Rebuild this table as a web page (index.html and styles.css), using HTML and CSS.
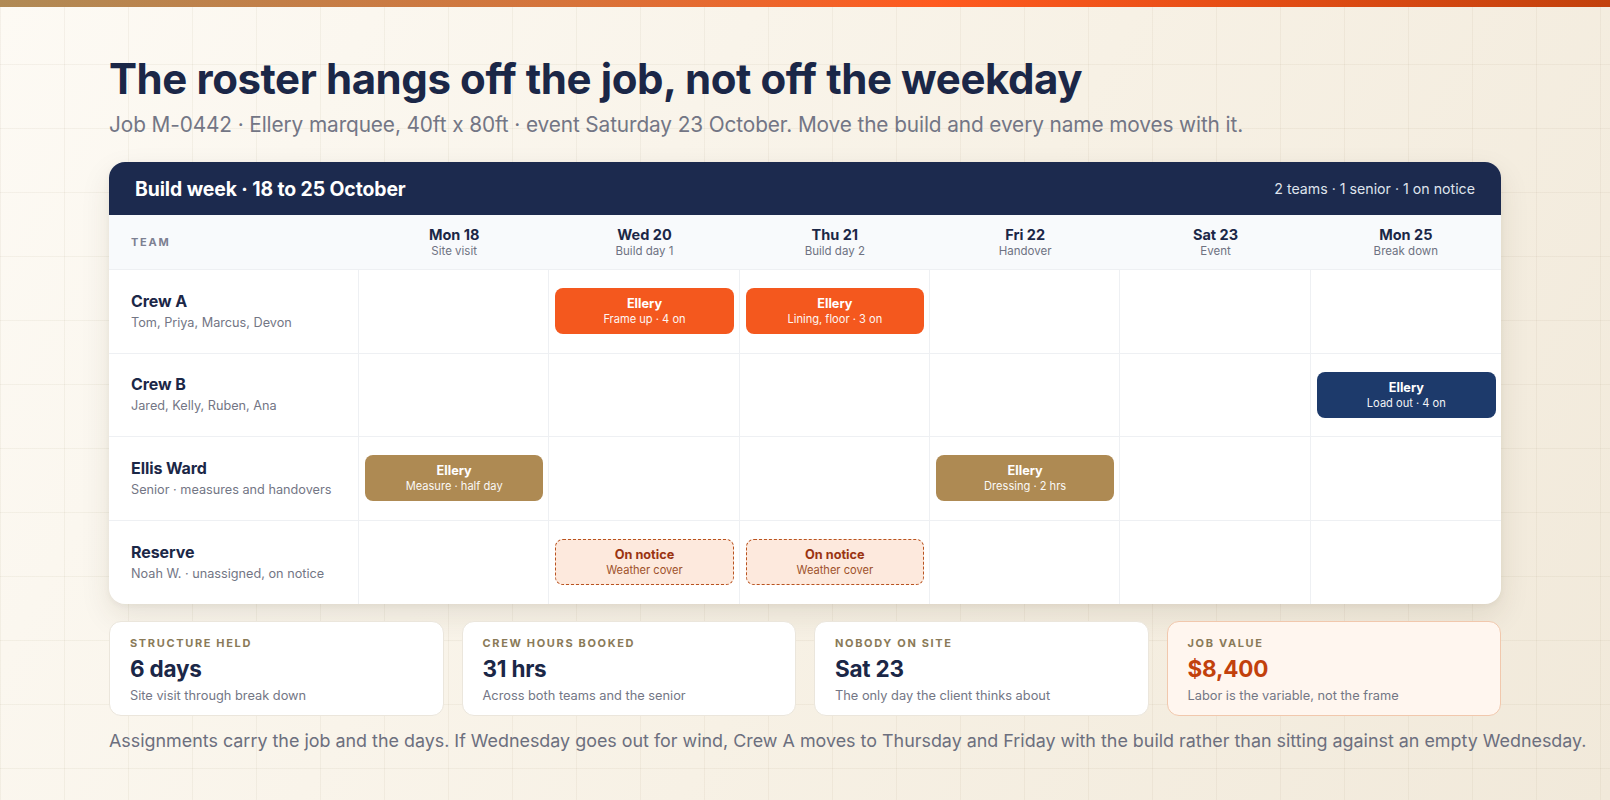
FILE: index.html
```html
<!DOCTYPE html>
<html lang="en">
<head>
<meta charset="utf-8">
<title>Build week roster</title>
<link rel="stylesheet" href="styles.css">
</head>
<body>
<div class="topbar"></div>
<main class="page">
  <h1 class="title">The roster hangs off the job, not off the weekday</h1>
  <p class="lede">Job M-0442 · Ellery marquee, 40ft x 80ft · event Saturday 23 October. Move the build and every name moves with it.</p>

  <section class="board">
    <header class="board-head">
      <h2 class="board-title">Build week · 18 to 25 October</h2>
      <span class="board-meta">2 teams · 1 senior · 1 on notice</span>
    </header>
    <div class="grid">
      <div class="cell colhead team-label">TEAM</div>
      <div class="cell colhead day"><span class="day-name">Mon 18</span><span class="day-sub">Site visit</span></div>
      <div class="cell colhead day"><span class="day-name">Wed 20</span><span class="day-sub">Build day 1</span></div>
      <div class="cell colhead day"><span class="day-name">Thu 21</span><span class="day-sub">Build day 2</span></div>
      <div class="cell colhead day"><span class="day-name">Fri 22</span><span class="day-sub">Handover</span></div>
      <div class="cell colhead day"><span class="day-name">Sat 23</span><span class="day-sub">Event</span></div>
      <div class="cell colhead day last"><span class="day-name">Mon 25</span><span class="day-sub">Break down</span></div>

      <div class="cell team"><span class="team-name">Crew A</span><span class="team-sub">Tom, Priya, Marcus, Devon</span></div>
      <div class="cell slot"></div>
      <div class="cell slot"><div class="chip orange"><span class="chip-t">Ellery</span><span class="chip-s">Frame up · 4 on</span></div></div>
      <div class="cell slot"><div class="chip orange"><span class="chip-t">Ellery</span><span class="chip-s">Lining, floor · 3 on</span></div></div>
      <div class="cell slot"></div>
      <div class="cell slot"></div>
      <div class="cell slot last"></div>

      <div class="cell team"><span class="team-name">Crew B</span><span class="team-sub">Jared, Kelly, Ruben, Ana</span></div>
      <div class="cell slot"></div>
      <div class="cell slot"></div>
      <div class="cell slot"></div>
      <div class="cell slot"></div>
      <div class="cell slot"></div>
      <div class="cell slot last"><div class="chip navy"><span class="chip-t">Ellery</span><span class="chip-s">Load out · 4 on</span></div></div>

      <div class="cell team"><span class="team-name">Ellis Ward</span><span class="team-sub">Senior · measures and handovers</span></div>
      <div class="cell slot"><div class="chip tan"><span class="chip-t">Ellery</span><span class="chip-s">Measure · half day</span></div></div>
      <div class="cell slot"></div>
      <div class="cell slot"></div>
      <div class="cell slot"><div class="chip tan"><span class="chip-t">Ellery</span><span class="chip-s">Dressing · 2 hrs</span></div></div>
      <div class="cell slot"></div>
      <div class="cell slot last"></div>

      <div class="cell team bottom"><span class="team-name">Reserve</span><span class="team-sub">Noah W. · unassigned, on notice</span></div>
      <div class="cell slot bottom"></div>
      <div class="cell slot bottom"><div class="chip notice"><span class="chip-t">On notice</span><span class="chip-s">Weather cover</span></div></div>
      <div class="cell slot bottom"><div class="chip notice"><span class="chip-t">On notice</span><span class="chip-s">Weather cover</span></div></div>
      <div class="cell slot bottom"></div>
      <div class="cell slot bottom"></div>
      <div class="cell slot bottom last"></div>
    </div>
  </section>

  <section class="stats">
    <div class="stat">
      <span class="stat-label">STRUCTURE HELD</span>
      <span class="stat-value">6 days</span>
      <span class="stat-sub">Site visit through break down</span>
    </div>
    <div class="stat">
      <span class="stat-label">CREW HOURS BOOKED</span>
      <span class="stat-value">31 hrs</span>
      <span class="stat-sub">Across both teams and the senior</span>
    </div>
    <div class="stat">
      <span class="stat-label">NOBODY ON SITE</span>
      <span class="stat-value">Sat 23</span>
      <span class="stat-sub">The only day the client thinks about</span>
    </div>
    <div class="stat accent">
      <span class="stat-label">JOB VALUE</span>
      <span class="stat-value">$8,400</span>
      <span class="stat-sub">Labor is the variable, not the frame</span>
    </div>
  </section>

  <p class="note">Assignments carry the job and the days. If Wednesday goes out for wind, Crew A moves to Thursday and Friday with the build rather than sitting against an empty Wednesday.</p>
</main>
</body>
</html>
```

FILE: styles.css
```css
* { box-sizing: border-box; }

html, body {
  margin: 0;
  padding: 0;
}

body {
  font-family: Inter, "Noto Sans", sans-serif;
  color: #1b2747;
  min-height: 800px;
  background-color: #f8f3ea;
  background-image:
    linear-gradient(to right, rgba(150, 130, 95, 0.08) 1px, transparent 1px),
    linear-gradient(to bottom, rgba(150, 130, 95, 0.08) 1px, transparent 1px),
    linear-gradient(120deg, #fdfaf4 0%, #f7f1e5 55%, #f1e9da 100%);
  background-size: 64px 64px, 64px 64px, 100% 100%;
  overflow: hidden;
}

.topbar {
  height: 7px;
  background: linear-gradient(90deg, #b08a55 0%, #d6743b 35%, #ff5a1f 58%, #e84f16 75%, #c2410c 100%);
}

.page {
  width: 1392px;
  margin: 0 auto;
  padding-top: 48px;
}

.title {
  margin: 0;
  font-size: 42px;
  line-height: 48px;
  font-weight: 700;
  letter-spacing: -0.01em;
  color: #1b2747;
}

.lede {
  margin: 8px 0 0;
  font-size: 20.8px;
  line-height: 28px;
  color: #737685;
  letter-spacing: -0.005em;
}

.board {
  margin-top: 23px;
  background: #ffffff;
  border-radius: 16px;
  overflow: hidden;
  box-shadow: 0 12px 30px rgba(60, 45, 20, 0.10), 0 2px 6px rgba(60, 45, 20, 0.05);
}

.board-head {
  height: 53px;
  background: #1c2a4e;
  display: flex;
  align-items: center;
  justify-content: space-between;
  padding: 0 26px;
}

.board-title {
  margin: 0;
  font-size: 19.4px;
  font-weight: 700;
  color: #ffffff;
  letter-spacing: -0.005em;
}

.board-meta {
  font-size: 14.2px;
  color: #dfe3ec;
}

.grid {
  display: grid;
  grid-template-columns: 250px repeat(6, 1fr);
  grid-template-rows: 55px repeat(4, 83.5px);
}

.cell {
  border-right: 1px solid #eef0f3;
  border-bottom: 1px solid #eef0f3;
  display: flex;
  flex-direction: column;
  justify-content: center;
}

.cell.last { border-right: none; }
.cell.bottom { border-bottom: none; }

.colhead {
  background: #f8fafc;
  border-right: none;
}

.team-label {
  padding-left: 22px;
  font-size: 11px;
  font-weight: 700;
  letter-spacing: 0.16em;
  color: #7c8092;
}

.day {
  align-items: center;
  gap: 1px;
}

.day-name {
  font-size: 14.5px;
  font-weight: 700;
  color: #1b2747;
  line-height: 17px;
}

.day-sub {
  font-size: 11.5px;
  color: #6e7282;
  line-height: 15px;
}

.team {
  padding-left: 22px;
  gap: 4px;
}

.team-name {
  font-size: 16px;
  font-weight: 700;
  color: #1b2747;
  line-height: 19px;
  letter-spacing: -0.005em;
}

.team-sub {
  font-size: 12.7px;
  color: #737685;
  line-height: 16px;
}

.slot {
  padding: 0 5px 0 6px;
}

.chip {
  height: 46px;
  border-radius: 8px;
  display: flex;
  flex-direction: column;
  align-items: center;
  justify-content: center;
  gap: 1px;
  color: #ffffff;
}

.chip-t {
  font-size: 12.7px;
  font-weight: 700;
  line-height: 15px;
}

.chip-s {
  font-size: 11.1px;
  line-height: 14px;
  opacity: 0.95;
}

.chip.orange { background: #f4581e; }
.chip.navy { background: #1d3a6b; }
.chip.tan { background: #ae8a53; }

.chip.notice {
  background: #fde9dd;
  border: 1px dashed #b9531f;
  color: #9a3412;
}

.chip.notice .chip-s { color: #9a4a22; }

.stats {
  margin-top: 17px;
  display: grid;
  grid-template-columns: repeat(4, 1fr);
  gap: 18px;
}

.stat {
  height: 95px;
  background: #ffffff;
  border: 1px solid #ebe6dc;
  border-radius: 12px;
  padding: 14px 20px 0;
  display: flex;
  flex-direction: column;
}

.stat.accent {
  background: #fff6ef;
  border-color: #f1c8ad;
}

.stat-label {
  font-size: 11px;
  font-weight: 700;
  letter-spacing: 0.15em;
  color: #8a7a58;
  line-height: 14px;
}

.stat-value {
  margin-top: 5px;
  font-size: 22.5px;
  font-weight: 700;
  color: #1b2747;
  line-height: 28px;
  letter-spacing: -0.01em;
}

.stat.accent .stat-value { color: #c2410c; }

.stat-sub {
  margin-top: 5px;
  font-size: 12.8px;
  color: #737685;
  line-height: 16px;
}

.note {
  margin: 13px 0 0;
  font-size: 17.9px;
  line-height: 24px;
  color: #6c6f7e;
  white-space: nowrap;
}
```
